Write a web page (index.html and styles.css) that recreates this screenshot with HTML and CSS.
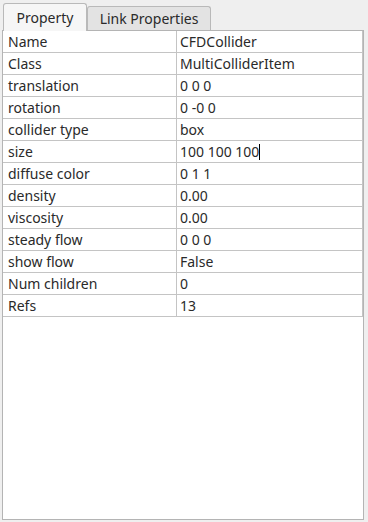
FILE: index.html
```html
<!DOCTYPE html>
<html>
<head>
<meta charset="utf-8">
<link rel="stylesheet" href="styles.css">
</head>
<body>
<div class="tabs">
  <div class="tab active">Property</div>
  <div class="tab">Link Properties</div>
</div>
<div class="frame">
  <div class="grid">
    <div class="row"><div class="k">Name</div><div class="v">CFDCollider</div></div>
    <div class="row"><div class="k">Class</div><div class="v">MultiColliderItem</div></div>
    <div class="row"><div class="k">translation</div><div class="v">0 0 0</div></div>
    <div class="row"><div class="k">rotation</div><div class="v">0 -0 0</div></div>
    <div class="row"><div class="k">collider type</div><div class="v">box</div></div>
    <div class="row"><div class="k">size</div><div class="v"><span class="edit">100 100 100</span></div></div>
    <div class="row"><div class="k">diffuse color</div><div class="v">0 1 1</div></div>
    <div class="row"><div class="k">density</div><div class="v">0.00</div></div>
    <div class="row"><div class="k">viscosity</div><div class="v">0.00</div></div>
    <div class="row"><div class="k">steady flow</div><div class="v">0 0 0</div></div>
    <div class="row"><div class="k">show flow</div><div class="v">False</div></div>
    <div class="row"><div class="k">Num children</div><div class="v">0</div></div>
    <div class="row"><div class="k">Refs</div><div class="v">13</div></div>
  </div>
</div>
</body>
</html>
```

FILE: styles.css
```css
html, body {
  margin: 0;
  padding: 0;
  background: #efefef;
}
body {
  font-family: "Noto Sans", "Open Sans", sans-serif;
  font-size: 14px;
  color: #2a2a2a;
  width: 368px;
  height: 522px;
  overflow: hidden;
}
.tabs {
  display: flex;
  align-items: flex-end;
  height: 30px;
  padding-left: 3px;
  position: relative;
  z-index: 1;
}
.tab {
  box-sizing: border-box;
  height: 24px;
  width: 124px;
  border: 1px solid #b9b9b9;
  border-bottom: none;
  border-radius: 3px 3px 0 0;
  background: #e3e3e3;
  display: flex;
  align-items: center;
  justify-content: center;
  line-height: 1;
  padding-top: 1px;
}
.tab.active {
  width: 84px;
  height: 28px;
  margin-bottom: -1px;
  background: #f6f6f6;
  padding-top: 0;
}
.frame {
  box-sizing: border-box;
  margin-left: 2px;
  width: 362px;
  height: 490px;
  border: 1px solid #b4b4b4;
  background: #ffffff;
}
.grid {
  width: 359px;
  border-right: 1px solid #c4c4c4;
}
.row {
  display: grid;
  grid-template-columns: 174px 1fr;
  height: 22px;
  box-sizing: border-box;
  border-bottom: 1px solid #c4c4c4;
}
.k, .v {
  display: flex;
  align-items: center;
  line-height: 1;
  padding-top: 1px;
}
.k {
  padding-left: 5px;
  border-right: 1px solid #c4c4c4;
}
.v {
  padding-left: 3px;
}
.edit {
  border-right: 1px solid #000;
  line-height: 16px;
}
```
